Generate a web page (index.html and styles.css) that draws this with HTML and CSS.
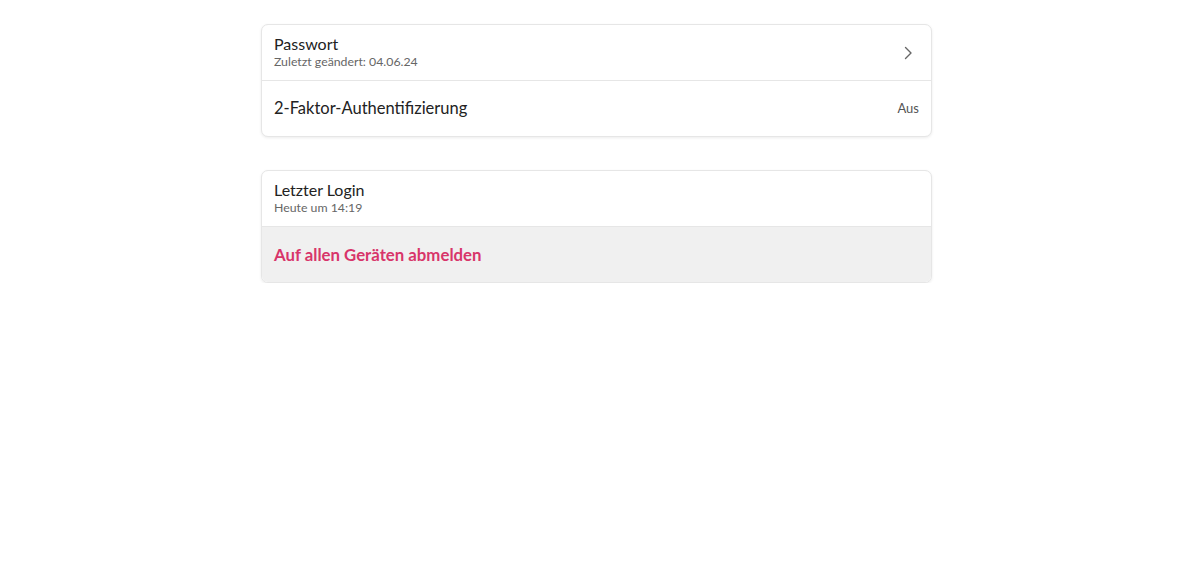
FILE: index.html
```html
<!DOCTYPE html>
<html lang="de">
<head>
    <meta charset="UTF-8">
    <meta name="viewport" content="width=device-width, initial-scale=1.0">
    <title>Sicherheit</title>
    <link rel="stylesheet" href="styles.css">
</head>
<body>
    <div class="container">
        <div class="card">
            <div class="row">
                <div class="row-text">
                    <div class="title">Passwort</div>
                    <div class="subtitle">Zuletzt geändert: 04.06.24</div>
                </div>
                <svg class="chevron" width="10" height="14" viewBox="0 0 10 14">
                    <path d="M2.5 1.5 L8 7 L2.5 12.5" fill="none" stroke="#666" stroke-width="1.4" stroke-linecap="round" stroke-linejoin="round"/>
                </svg>
            </div>
            <div class="row">
                <div class="title title-large">2-Faktor-Authentifizierung</div>
                <div class="value">Aus</div>
            </div>
        </div>

        <div class="card">
            <div class="row">
                <div class="row-text">
                    <div class="title">Letzter Login</div>
                    <div class="subtitle">Heute um 14:19</div>
                </div>
            </div>
            <div class="row row-action">
                <div class="action">Auf allen Geräten abmelden</div>
            </div>
        </div>
    </div>
</body>
</html>
```

FILE: styles.css
```css
body {
    font-family: Lato, "Noto Sans", sans-serif;
    margin: 0;
    padding: 0;
    background-color: #fff;
    color: #222;
}
.container {
    width: 671px;
    margin: 24px auto 0;
    display: flex;
    flex-direction: column;
    gap: 33px;
    transform: translateX(-1px);
}
.card {
    background: #fff;
    border: 1px solid #e6e6e6;
    border-radius: 7px;
    box-shadow: 0 1px 3px rgba(0, 0, 0, 0.08);
    overflow: hidden;
}
.row {
    height: 55px;
    display: flex;
    align-items: center;
    justify-content: space-between;
    padding: 0 12px;
}
.row + .row {
    border-top: 1px solid #e6e6e6;
}
.row-text {
    margin-top: -2px;
}
.title {
    font-size: 16px;
    line-height: 19px;
    color: #222;
}
.title-large {
    font-size: 16.5px;
    margin-top: -1px;
}
.subtitle {
    font-size: 12.3px;
    line-height: 15px;
    color: #666;
    margin-top: 1px;
}
.chevron {
    margin-right: 6px;
}
.value {
    font-size: 13px;
    color: #555;
    margin-top: -1px;
}
.row-action {
    background-color: #f0f0f0;
}
.action {
    font-size: 16.8px;
    font-weight: bold;
    color: #d8356a;
    margin-top: -1px;
}
```
